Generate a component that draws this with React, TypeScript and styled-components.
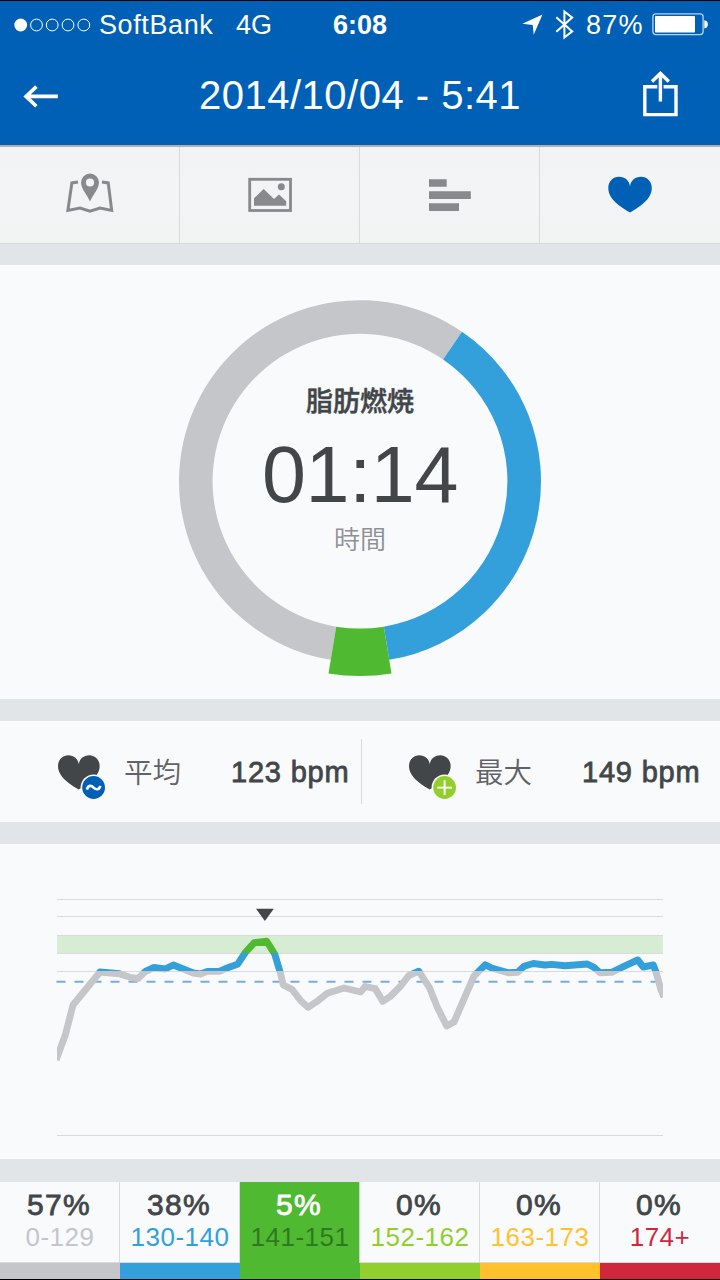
import React from "react";
import styled, { createGlobalStyle } from "styled-components";

const sans = `"Liberation Sans", "Noto Sans CJK JP", sans-serif`;
const color = {
  brand: "#0060b6",
  page: "#f9fafc",
  gap: "#e1e5e8",
  ink: "#424649",
  rest: "#c4c6ca",
  blue: "#33a0dc",
  green: "#50b932",
  lime: "#92ce2c",
  amber: "#ffc22c",
  red: "#cf283c",
  rule: "#d8dadc",
};

const GlobalStyle = createGlobalStyle`
  * { box-sizing: border-box; }
  body { margin: 0; background: ${color.page}; font-family: ${sans}; }
  svg { display: block; flex: none; }
`;

const Screen = styled.main`
  width: 720px;
  height: 1280px;
  display: flex;
  flex-direction: column;
  overflow: hidden;
  background: ${color.page};
  border-top: 1px solid #000;
  border-bottom: 1px solid #000;
  color: ${color.ink};
`;

const Header = styled.header`
  height: 144px;
  flex: none;
  background: ${color.brand};
  color: #fff;
`;

const StatusBar = styled.div`
  height: 48px;
  display: flex;
  align-items: center;
  padding-left: 14px;
`;

const StatusText = styled.span<{ $width: number; $bold?: boolean; $spacing?: number }>`
  width: ${(p) => p.$width}px;
  flex: none;
  font-size: 27px;
  line-height: 48px;
  white-space: nowrap;
  font-weight: ${(p) => (p.$bold ? 700 : 400)};
  letter-spacing: ${(p) => p.$spacing ?? 0}px;
`;

const NavBar = styled.div`
  height: 96px;
  display: grid;
  grid-template-columns: 80px 1fr 80px;
  align-items: start;
`;

const Title = styled.h1`
  margin: 0;
  text-align: center;
  font-size: 40px;
  font-weight: 400;
  line-height: 93px;
  letter-spacing: 0.5px;
  white-space: nowrap;
`;

const Tabs = styled.nav`
  height: 99px;
  flex: none;
  display: grid;
  grid-template-columns: repeat(4, 180px);
  background: linear-gradient(#f1f3f5, #f2f4f4);
  border-top: 2px solid #aeb0b2;
  border-bottom: 1px solid #d6dadb;
`;

const Tab = styled.div`
  display: flex;
  align-items: center;
  justify-content: center;
  &:not(:last-child) {
    box-shadow: inset -1px 0 #d9dcde;
  }
`;

const Gap = styled.div<{ $height: number }>`
  height: ${(p) => p.$height}px;
  flex: none;
  background: ${color.gap};
`;

const RingPanel = styled.section`
  height: 434px;
  flex: none;
  display: grid;
  justify-items: center;
  > * {
    grid-area: 1 / 1;
  }
`;

const RingText = styled.div`
  display: flex;
  flex-direction: column;
  align-items: center;
  padding-top: 115px;
`;

const ZoneName = styled.div`
  font: 500 27px/40px "Noto Sans CJK JP", sans-serif;
  -webkit-text-stroke: 0.5px currentColor;
`;

const ZoneTime = styled.div`
  font-size: 79px;
  line-height: 92px;
  margin-top: 9px;
  letter-spacing: -0.3px;
`;

const ZoneUnit = styled.div`
  font: 350 26px/40px "Noto Sans CJK JP", sans-serif;
  margin-top: -3px;
  color: #8f9194;
`;

const Stats = styled.section`
  height: 101px;
  flex: none;
  display: flex;
  align-items: center;
`;

const Stat = styled.div<{ $indent: number; $width: number }>`
  width: ${(p) => p.$width}px;
  height: 65px;
  display: flex;
  align-items: center;
  padding-left: ${(p) => p.$indent}px;
  &:first-child {
    border-right: 1px solid ${color.rule};
  }
`;

const StatLabel = styled.span`
  width: 123px;
  flex: none;
  padding: 0 0 2px 16px;
  font: 350 28.5px/60px "Noto Sans CJK JP", sans-serif;
  color: #606265;
  white-space: nowrap;
`;

const StatValue = styled.span`
  font-size: 29px;
  line-height: 60px;
  padding-top: 1px;
  letter-spacing: 0.8px;
  white-space: nowrap;
  -webkit-text-stroke: 0.8px currentColor;
`;

const ChartPanel = styled.section`
  height: 315px;
  flex: none;
`;

const Zones = styled.section`
  height: 97px;
  flex: none;
  display: grid;
  grid-template-columns: repeat(6, 120px);
`;

const Zone = styled.div<{ $color: string; $active?: boolean }>`
  display: flex;
  flex-direction: column;
  align-items: center;
  padding: 6px 2px 0 0;
  border-bottom: 16px solid ${(p) => p.$color};
  background: ${(p) => (p.$active ? p.$color : color.page)};
  box-shadow: ${(p) => (p.$active ? "inset -1px 0 #c5dcc2" : `inset -1px -1px ${color.rule}`)};
  &:last-child {
    box-shadow: inset 0 -1px ${color.rule};
  }
`;

const Percent = styled.div<{ $active?: boolean }>`
  font-size: 30px;
  line-height: 34px;
  letter-spacing: 1.4px;
  color: ${(p) => (p.$active ? "#fff" : color.ink)};
  -webkit-text-stroke: 0.8px currentColor;
`;

const Range = styled.div<{ $color: string }>`
  font-size: 26px;
  line-height: 30px;
  padding-left: 2px;
  letter-spacing: 0.5px;
  color: ${(p) => p.$color};
`;

const SignalDots = () => (
  <svg width="85" height="20" viewBox="14 14.5 85 20" fill="none" stroke="#fff">
    <circle cx="20.7" cy="24.5" r="6.4" fill="#fff" stroke="none" />
    {[36.5, 52.2, 68, 83.8].map((x) => (
      <circle key={x} cx={x} cy="24.5" r="5.9" strokeWidth="1" />
    ))}
  </svg>
);

const StatusIcons = () => (
  <svg width="64" height="48" viewBox="522 1 64 48" fill="none">
    <path d="M522.3 23.7 542.5 14.5 533.7 34.8 532.7 25Z" fill="#fff" />
    <path d="M556.3 17.3 572.2 31.4 564.4 37.5V11.5L572.2 17.6 556.3 31.8" stroke="#fff" strokeWidth="2" />
  </svg>
);

const Battery = () => (
  <svg width="58" height="48" viewBox="652 1 58 48">
    <rect x="652.9" y="13.9" width="50.2" height="20.7" rx="3" fill="none" stroke="#b9d2ea" strokeWidth="1.3" />
    <rect x="655" y="16" width="40" height="16.6" rx="1" fill="#fff" />
    <path d="M704.3 20.2Q707.8 20.6 707.8 24.3T704.3 28.4Z" fill="#fff" />
  </svg>
);

const BackIcon = () => (
  <svg width="80" height="96" viewBox="0 49 80 96" fill="none" stroke="#fff" strokeWidth="3.6">
    <path d="M57.8 96.4H26M36.4 86.6 26 96.4 36.4 106.2" />
  </svg>
);

const ShareIcon = () => (
  <svg width="80" height="96" viewBox="640 49 80 96" fill="none" stroke="#fff">
    <path d="M657.3 86.8H644.8V114.6H676V86.8H663.6" strokeWidth="3.4" />
    <path d="M660.4 101.5V73.5M652 81.4 660.4 73.4 668.8 81.4" strokeWidth="3.4" />
  </svg>
);

const MapIcon = () => (
  <svg width="60" height="60" viewBox="60 165 60 60">
    <path
      d="M78 182 71.9 182.9 67.9 210.4 80 208 90 211.2 100 208 111.7 210.4 108.2 182.9 102 182"
      fill="none"
      stroke="#87898c"
      strokeWidth="3"
    />
    <path
      fillRule="evenodd"
      fill="#87898c"
      d="M90 201.6C87.5 195.5 81 188.8 81 182.6A9 9 0 0 1 99 182.6C99 188.8 92.5 195.5 90 201.6ZM90 178.4A4.1 4.1 0 1 0 90 186.6A4.1 4.1 0 1 0 90 178.4Z"
    />
  </svg>
);

const PhotoIcon = () => (
  <svg width="60" height="60" viewBox="240 165 60 60" fill="#87898c">
    <rect x="249.7" y="179.3" width="40.8" height="31.2" fill="none" stroke="#87898c" strokeWidth="2.8" />
    <circle cx="281.3" cy="186.7" r="3.5" />
    <path d="M254 205.8V198.3L263.7 188.9 274 199 279 194.4 286.2 201.3V205.8Z" />
  </svg>
);

const LapsIcon = () => (
  <svg width="60" height="60" viewBox="420 165 60 60" fill="#87898c">
    <path d="M429 179.3h17.7v7.5H429ZM429 191.3h41.8v7.7H429ZM429 203.3h30v7.7H429Z" />
  </svg>
);

const heart =
  "M630 212.6C621 207.2 608.3 199.5 608.3 188C608.3 181.4 613 176.8 619 176.8C625 176.8 629.6 181 630 186.5C630.4 181 635 176.8 641 176.8C647 176.8 651.8 181.4 651.8 188C651.8 199.5 639 207.2 630 212.6Z";

const HeartIcon = () => (
  <svg width="60" height="60" viewBox="600 165 60 60">
    <path d={heart} fill={color.brand} />
  </svg>
);

const BadgedHeart = ({ kind }: { kind: "average" | "max" }) => (
  <svg width="50" height="60" viewBox="58 742 50 60">
    <g transform="translate(58 755.2) scale(.957) translate(-608.3 -176.8)">
      <path d={heart} fill={color.ink} />
    </g>
    <circle cx="93.6" cy="787.5" r="13" fill={color.page} />
    <circle cx="93.6" cy="787.5" r="11.4" fill={kind === "average" ? color.brand : color.lime} />
    {kind === "average" ? (
      <path d="M86.9 789.6C88.2 784.4 91.5 785.5 93.6 787.6S99 790.6 100.4 785.8" fill="none" stroke="#fff" strokeWidth="2.6" />
    ) : (
      <path d="M86.3 787.6H101M93.6 780.2V795" stroke="#fff" strokeWidth="1.9" />
    )}
  </svg>
);

const CX = 360;
const CY = 481.2;
const INNER = 147.4;

const at = (r: number, deg: number) => {
  const a = (deg * Math.PI) / 180;
  return `${(CX + r * Math.sin(a)).toFixed(2)} ${(CY - r * Math.cos(a)).toFixed(2)}`;
};

const slice = (from: number, to: number, outer: number) => {
  const large = to - from > 180 ? 1 : 0;
  return `M${at(outer, from)}A${outer} ${outer} 0 ${large} 1 ${at(outer, to)}L${at(INNER, to)}A${INNER} ${INNER} 0 ${large} 0 ${at(INNER, from)}Z`;
};

const Ring = () => (
  <svg width="400" height="434" viewBox="160 265 400 434">
    <path d={slice(189.3, 394.3, 181)} fill={color.rest} />
    <path d={slice(34.3, 170.7, 181)} fill={color.blue} />
    <path d={slice(170.7, 189.3, 194.9)} fill={color.green} />
  </svg>
);

const trace =
  "56,1060 65.3,1035 73,1005 86.7,988.3 100,972 119.3,973.7 130,977.3 138,978.5 145.3,971.5 154,967.5 165,969 173.3,965 193.3,973 200.7,974 207.3,971.4 220,971.2 227.7,967.7 237.5,964.3 245.3,952.5 254.3,942.7 266.7,941.3 274.7,954 280,971.7 283.3,985 292,989.3 301,1001 308,1007.3 316.7,1001.7 327.3,993.3 344,988 360.7,992 365,986.5 375.3,988.7 382.7,1001.3 390,996.7 400.7,986 408.7,975.7 418.7,971.2 429.3,987.3 437.3,1007.3 446.7,1026 454,1022 465,996.7 474,976 485.3,964.8 491.7,968 508.3,972.8 517.7,972.3 524,966.3 533.3,963.5 545,965 551.7,964.4 565,965.8 587.3,964 594,967.3 600,972.7 611.7,972.3 626,965.3 637.7,960 643.3,967 653.3,965 656,972 661,990 664,997";

const bands = [
  { id: "high", y: 930, height: 23, stroke: color.green },
  { id: "mid", y: 953, height: 18, stroke: color.blue },
  { id: "low", y: 971, height: 150, stroke: color.rest },
];

const HeartRateChart = () => (
  <svg width="720" height="315" viewBox="0 844 720 315">
    <rect x="57" y="935" width="606" height="18.5" fill="#d6ecd3" />
    {[899, 916, 935, 953, 971, 1135].map((y) => (
      <rect key={y} x="57" y={y} width="606" height="1" fill={color.rule} />
    ))}
    <path d="M56.5 981.8H663" stroke="#78acdc" strokeWidth="2" strokeDasharray="9 9" />
    {bands.map((b) => (
      <g key={b.id}>
        <clipPath id={b.id}>
          <rect x="57" y={b.y} width="606" height={b.height} />
        </clipPath>
        <polyline
          points={trace}
          clipPath={`url(#${b.id})`}
          fill="none"
          stroke={b.stroke}
          strokeWidth="6.9"
          strokeLinejoin="round"
        />
      </g>
    ))}
    <path d="M256 908.8H273.8L264.9 921Z" fill={color.ink} />
  </svg>
);

const zones = [
  { percent: "57%", range: "0-129", fill: color.rest },
  { percent: "38%", range: "130-140", fill: color.blue },
  { percent: "5%", range: "141-151", fill: color.green, active: true },
  { percent: "0%", range: "152-162", fill: color.lime },
  { percent: "0%", range: "163-173", fill: color.amber },
  { percent: "0%", range: "174+", fill: color.red },
];

export default function App() {
  return (
    <Screen>
      <GlobalStyle />
      <Header>
        <StatusBar>
          <SignalDots />
          <StatusText $width={137} $spacing={0.6}>SoftBank</StatusText>
          <StatusText $width={97}>4G</StatusText>
          <StatusText $width={189} $bold>6:08</StatusText>
          <StatusIcons />
          <StatusText $width={66} $spacing={1.2}>87%</StatusText>
          <Battery />
        </StatusBar>
        <NavBar>
          <BackIcon />
          <Title>2014/10/04 - 5:41</Title>
          <ShareIcon />
        </NavBar>
      </Header>
      <Tabs>
        <Tab><MapIcon /></Tab>
        <Tab><PhotoIcon /></Tab>
        <Tab><LapsIcon /></Tab>
        <Tab><HeartIcon /></Tab>
      </Tabs>
      <Gap $height={21} />
      <RingPanel>
        <Ring />
        <RingText>
          <ZoneName>脂肪燃焼</ZoneName>
          <ZoneTime>01:14</ZoneTime>
          <ZoneUnit>時間</ZoneUnit>
        </RingText>
      </RingPanel>
      <Gap $height={22} />
      <Stats>
        <Stat $indent={58} $width={362}>
          <BadgedHeart kind="average" />
          <StatLabel>平均</StatLabel>
          <StatValue>123 bpm</StatValue>
        </Stat>
        <Stat $indent={47} $width={358}>
          <BadgedHeart kind="max" />
          <StatLabel>最大</StatLabel>
          <StatValue>149 bpm</StatValue>
        </Stat>
      </Stats>
      <Gap $height={22} />
      <ChartPanel>
        <HeartRateChart />
      </ChartPanel>
      <Gap $height={23} />
      <Zones>
        {zones.map((z) => (
          <Zone key={z.range} $color={z.fill} $active={z.active}>
            <Percent $active={z.active}>{z.percent}</Percent>
            <Range $color={z.active ? "#307820" : z.fill}>{z.range}</Range>
          </Zone>
        ))}
      </Zones>
    </Screen>
  );
}
